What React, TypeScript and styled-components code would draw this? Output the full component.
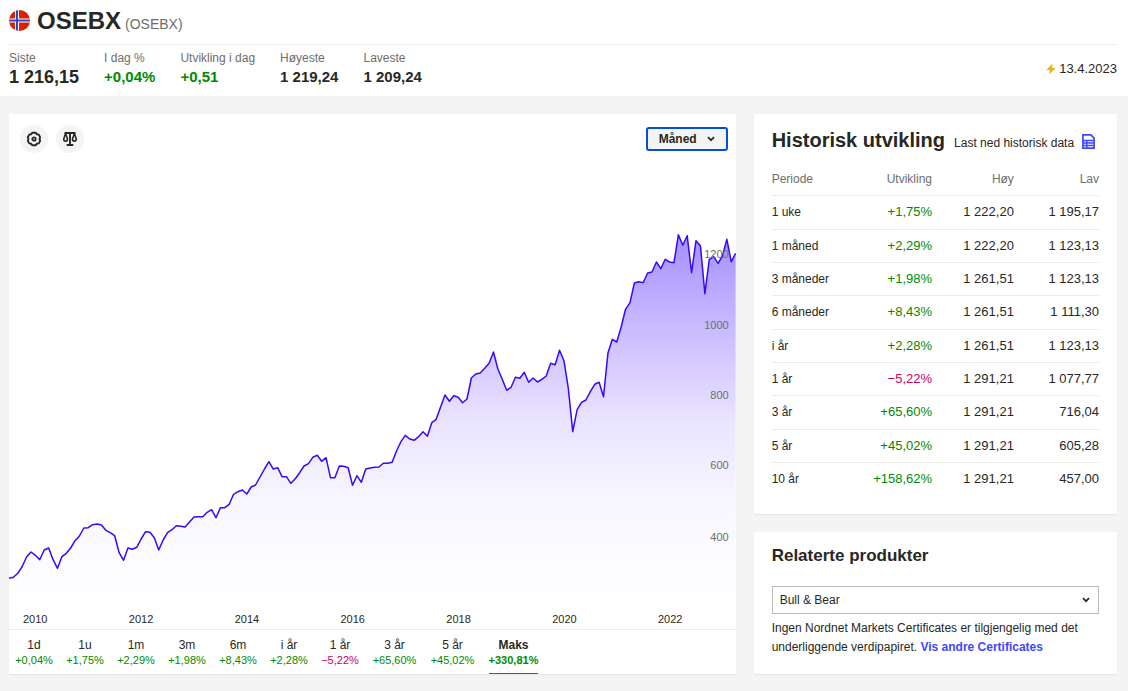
import React from "react";
import styled, { createGlobalStyle } from "styled-components";

const GlobalStyle = createGlobalStyle`
  *, *::before, *::after { box-sizing: border-box; }
  body {
    margin: 0;
    background: #f4f4f4;
    color: #282823;
    font-family: "Liberation Sans", Arial, sans-serif;
    font-size: 12px;
    line-height: 20px;
  }
  button, select { font: inherit; color: inherit; }
  h1, h2, p, dl, dd { margin: 0; }
`;

const green = "#008a00";
const red = "#cc0058";
const blue = "#4048ff";

const Header = styled.header`
  background: #fff;
  height: 96px;
  padding: 0 11px 0 9px;
`;
const TitleBar = styled.div`
  display: flex;
  align-items: center;
  height: 45px;
  padding-bottom: 4px;
  border-bottom: 1px solid #ebebe8;
`;
const Title = styled.h1`
  margin-left: 7px;
  padding-top: 2px;
  font-size: 24px;
  line-height: 30px;
  font-weight: 700;
`;
const Ticker = styled.span`
  margin-left: 4px;
  padding-top: 8px;
  font-size: 14px;
  color: #6e6e69;
`;
const StatsBar = styled.div`
  display: flex;
  align-items: center;
  justify-content: space-between;
  padding-top: 3px;
`;
const Stats = styled.dl`
  display: flex;
  gap: 25px;
`;
const StatLabel = styled.dt`
  line-height: 20px;
  color: #6e6e69;
`;
const StatValue = styled.dd<{ $large?: boolean; $up?: boolean }>`
  font-size: ${(p) => (p.$large ? 18 : 15)}px;
  line-height: 18px;
  font-weight: 700;
  color: ${(p) => (p.$up ? green : "inherit")};
`;
const Updated = styled.time`
  display: flex;
  align-items: center;
  gap: 3px;
  padding-top: 4px;
  font-size: 13px;
`;

const Main = styled.main`
  display: grid;
  grid-template-columns: 2fr 1fr;
  gap: 18px;
  padding: 18px 11px 18px 9px;
`;
const Card = styled.section`
  background: #fff;
  box-shadow: 0 1px 1px rgba(0, 0, 0, 0.05);
`;
const ChartCard = styled(Card)`
  display: flex;
  flex-direction: column;
  min-width: 0;
`;
const Toolbar = styled.div`
  display: flex;
  align-items: center;
  gap: 8px;
  padding: 11px 8px 0 11px;
`;
const RoundButton = styled.button`
  display: grid;
  place-items: center;
  width: 28px;
  height: 28px;
  padding: 0;
  border: 0;
  border-radius: 50%;
  background: #f4f4f4;
`;
const SelectWrap = styled.div<{ $compact?: boolean }>`
  display: grid;
  align-items: center;
  margin-left: ${(p) => (p.$compact ? "auto" : 0)};
  > * { grid-area: 1 / 1; }
  > svg {
    justify-self: end;
    margin-right: ${(p) => (p.$compact ? 13 : 9)}px;
    pointer-events: none;
  }
`;
const ResolutionSelect = styled.select`
  appearance: none;
  width: 82px;
  height: 24px;
  padding: 0 11px;
  border: 2px solid #0050dc;
  border-radius: 3px;
  background: #f4f4f4;
  font-weight: 700;
`;
const ProductSelect = styled.select`
  appearance: none;
  width: 100%;
  height: 28px;
  padding: 0 7px;
  border: 1px solid #bcbcb6;
  border-radius: 0;
  background: #fff;
`;

const Plot = styled.div`
  position: relative;
  height: 450px;
  > svg { display: block; width: 100%; height: 100%; }
`;
const YLabel = styled.span`
  position: absolute;
  right: 7px;
  font-size: 11px;
  line-height: 16px;
  color: #6e6e69;
  transform: translateY(-50%);
`;
const XAxis = styled.div`
  display: flex;
  height: 27px;
  padding: 7px 0 0 14px;
  border-bottom: 1px solid #ebebe8;
  font-size: 11px;
  line-height: 18px;
`;
const XLabel = styled.span`flex: 0 0 14.85%;`;
const Periods = styled.div`
  display: flex;
  gap: 15px;
  height: 44px;
  padding: 6px 7px 0;
`;
const PeriodButton = styled.button<{ $width: number; $active?: boolean }>`
  display: flex;
  flex-direction: column;
  align-items: center;
  width: ${(p) => p.$width}px;
  padding: 0;
  border: 0;
  border-bottom: 1px solid ${(p) => (p.$active ? blue : "transparent")};
  background: none;
  white-space: nowrap;
  line-height: 18px;
  font-weight: ${(p) => (p.$active ? 700 : 400)};
`;
const PeriodChange = styled.span<{ $down?: boolean }>`
  font-size: 11px;
  line-height: 12px;
  color: ${(p) => (p.$down ? red : green)};
`;

const Side = styled.div`
  display: flex;
  flex-direction: column;
  gap: 18px;
  min-width: 0;
`;
const HistoryCard = styled(Card)`
  padding: 12px 18px 19px;
`;
const CardHead = styled.div`
  display: flex;
  align-items: baseline;
  gap: 9px;
`;
const CardTitle = styled.h2<{ $small?: boolean }>`
  font-size: ${(p) => (p.$small ? 17 : 20)}px;
  line-height: 28px;
  font-weight: 700;
  white-space: nowrap;
`;
const Download = styled.a`
  display: flex;
  align-items: center;
  gap: 8px;
  color: inherit;
  text-decoration: none;
  white-space: nowrap;
  > svg { margin-bottom: 3px; }
`;
const Table = styled.table`
  width: 100%;
  margin-top: 9px;
  border-collapse: collapse;
  table-layout: fixed;
`;
const HeadCell = styled.th<{ $width: number }>`
  width: ${(p) => p.$width}%;
  height: 32px;
  padding: 0;
  border-bottom: 1px solid #ebebe8;
  font-weight: 400;
  text-align: right;
  color: #6e6e69;
  &:first-child { text-align: left; }
`;
const Row = styled.tr`
  height: 33px;
  border-bottom: 1px solid #ebebe8;
  &:nth-child(3n + 1) { height: 34px; }
  &:last-child { border-bottom: 0; }
`;
const RowHead = styled.th`
  padding: 0;
  font-weight: 400;
  text-align: left;
`;
const Cell = styled.td<{ $color?: string }>`
  padding: 0;
  font-size: 13px;
  text-align: right;
  color: ${(p) => p.$color ?? "inherit"};
`;
const RelatedCard = styled(Card)`
  flex: 1;
  padding: 10px 18px 16px;
`;
const RelatedBody = styled.div`
  margin-top: 16px;
`;
const Note = styled.p`
  margin-top: 5px;
  line-height: 19px;
`;
const NoteLink = styled.a`
  color: ${blue};
  font-weight: 700;
  text-decoration: none;
`;

const Flag = () => (
  <svg width="21" height="21" viewBox="0 0 21 21" aria-hidden="true">
    <clipPath id="disc"><circle cx="10.5" cy="10.5" r="10.5" /></clipPath>
    <g clipPath="url(#disc)">
      <rect width="21" height="21" fill="#dc2000" />
      <path d="M8 0v21M0 10.500h21" stroke="#fff" strokeWidth="4" />
      <path d="M8 0v21M0 10.500h21" stroke="#2c46c8" strokeWidth="2" />
    </g>
  </svg>
);
const Bolt = () => (
  <svg width="10" height="12" viewBox="0 0 10 12" aria-hidden="true">
    <path d="M6.600 0.500 0.300 7h3.400L3.200 11.500 9.700 5H6z" fill="#e3b51e" />
  </svg>
);
const Gear = () => (
  <svg width="16" height="16" viewBox="0 0 16 16" fill="none" stroke="#282823" aria-hidden="true">
    <path d="M6.200 1.700h3.600l1 1.500 2 .4 1.300 2.600L13.600 8l.5 1.800-1.300 2.600-2 .4-1 1.500H6.200l-1-1.500-2-.4-1.300-2.600L2.400 8l-.5-1.800 1.300-2.600 2-.4z" strokeWidth="1.900" strokeLinejoin="round" />
    <circle cx="8" cy="8" r="1.700" strokeWidth="1.800" />
  </svg>
);
const Scales = () => (
  <svg width="16" height="16" viewBox="0 0 16 16" fill="none" stroke="#282823" aria-hidden="true">
    <path d="M2.500 2h11M8 2v12M4.700 14h6.600" strokeWidth="1.900" />
    <path d="M3.600 2.500 1.700 8c0 1.400.8 2.100 1.900 2.100s1.900-.7 1.900-2.100zM12.400 2.500 10.500 8c0 1.400.8 2.100 1.900 2.100s1.900-.7 1.900-2.100z" strokeWidth="1.600" strokeLinejoin="round" />
  </svg>
);
const Chevron = () => (
  <svg width="8" height="6" viewBox="0 0 8 6" fill="none" aria-hidden="true">
    <path d="M1 1.200 4 4.200 7 1.200" stroke="#282823" strokeWidth="1.700" />
  </svg>
);
const Sheet = () => (
  <svg width="13" height="15" viewBox="0 0 13 15" fill="none" stroke={blue} strokeWidth="1.700" aria-hidden="true">
    <path d="M.9.900h8l3.200 3.200v10H.9z" />
    <path d="M1 6.500h11M1 9h11M1 11.500h11M4.800 6.500v7.500" strokeWidth="1.400" />
  </svg>
);

/* Monthly closes, as distances from the top of the plot area. */
const closes = [
  425.3, 424.3, 420.3, 413.5, 404, 399, 402.3, 406.7, 397, 395, 406.7, 415.3, 403.7, 400.3, 395, 387.7, 383, 375,
  374.7, 371.7, 371, 372, 377.3, 379.7, 382.7, 399.7, 407.3, 395, 396.3, 394.3, 386, 378.7, 379.3, 384.7, 397, 387,
  379.7, 376.7, 372.7, 373.3, 374, 369, 364, 363.7, 363.7, 359.3, 356.7, 364.7, 354.7, 354.7, 351.3, 341.3, 338.7,
  337, 341, 334, 332, 324, 316, 308.7, 316, 314.7, 323.7, 323.7, 330.3, 325.7, 319.7, 313, 310.7, 304.3, 302.3,
  308.3, 304.7, 324.7, 324.7, 313, 313.3, 314.7, 332.3, 322.7, 329.3, 316, 315, 314.3, 314, 310.3, 310.3, 309.3,
  298, 288.7, 282.3, 286, 287.3, 283.7, 278.7, 283.3, 269.7, 266.3, 254, 242, 248.3, 242.7, 244.3, 249.7, 246, 225,
  221, 220, 215.3, 210.3, 199, 216, 226.3, 237.3, 234.3, 224.3, 225.3, 219.3, 229.3, 225, 229, 226.3, 223, 210.3,
  211.7, 197.3, 207.7, 235.3, 278.7, 256.7, 249.3, 247, 238.7, 231.3, 229.3, 243.7, 200.3, 186.3, 189, 174.3, 156.3,
  149.7, 130, 128.7, 129.7, 120, 119, 109, 115.7, 106.3, 109, 109.7, 81.7, 92.3, 82.7, 119.7, 87.7, 93, 140.7,
  106.7, 103.7, 110.3, 103, 86.3, 108.7, 100.3,
];
const step = 727 / (closes.length - 1);
const line = closes.map((y, i) => `${(i * step).toFixed(1)},${y}`).join(" ");

const yTicks = [
  { value: 1200, top: 101 },
  { value: 1000, top: 172 },
  { value: 800, top: 242 },
  { value: 600, top: 312 },
  { value: 400, top: 384 },
];
const years = [2010, 2012, 2014, 2016, 2018, 2020, 2022];

const stats = [
  { label: "Siste", value: "1 216,15", large: true },
  { label: "I dag %", value: "+0,04%", up: true },
  { label: "Utvikling i dag", value: "+0,51", up: true },
  { label: "Høyeste", value: "1 219,24" },
  { label: "Laveste", value: "1 209,24" },
];
const periods = [
  { label: "1d", change: "+0,04%", width: 36 },
  { label: "1u", change: "+1,75%", width: 36 },
  { label: "1m", change: "+2,29%", width: 36 },
  { label: "3m", change: "+1,98%", width: 36 },
  { label: "6m", change: "+8,43%", width: 36 },
  { label: "i år", change: "+2,28%", width: 36 },
  { label: "1 år", change: "−5,22%", width: 36 },
  { label: "3 år", change: "+65,60%", width: 43 },
  { label: "5 år", change: "+45,02%", width: 43 },
  { label: "Maks", change: "+330,81%", width: 49 },
];
const history = [
  ["1 uke", "+1,75%", "1 222,20", "1 195,17"],
  ["1 måned", "+2,29%", "1 222,20", "1 123,13"],
  ["3 måneder", "+1,98%", "1 261,51", "1 123,13"],
  ["6 måneder", "+8,43%", "1 261,51", "1 111,30"],
  ["i år", "+2,28%", "1 261,51", "1 123,13"],
  ["1 år", "−5,22%", "1 291,21", "1 077,77"],
  ["3 år", "+65,60%", "1 291,21", "716,04"],
  ["5 år", "+45,02%", "1 291,21", "605,28"],
  ["10 år", "+158,62%", "1 291,21", "457,00"],
];

export default function App() {
  return (
    <>
      <GlobalStyle />
      <Header>
        <TitleBar>
          <Flag />
          <Title>OSEBX</Title>
          <Ticker>(OSEBX)</Ticker>
        </TitleBar>
        <StatsBar>
          <Stats>
            {stats.map((s) => (
              <div key={s.label}>
                <StatLabel>{s.label}</StatLabel>
                <StatValue $large={s.large} $up={s.up}>{s.value}</StatValue>
              </div>
            ))}
          </Stats>
          <Updated dateTime="2023-04-13"><Bolt />13.4.2023</Updated>
        </StatsBar>
      </Header>
      <Main>
        <ChartCard>
          <Toolbar>
            <RoundButton type="button" aria-label="Innstillinger"><Gear /></RoundButton>
            <RoundButton type="button" aria-label="Sammenlign"><Scales /></RoundButton>
            <SelectWrap $compact>
              <ResolutionSelect aria-label="Oppløsning"><option>Måned</option></ResolutionSelect>
              <Chevron />
            </SelectWrap>
          </Toolbar>
          <Plot>
            <svg viewBox="0 0 727 450" preserveAspectRatio="none" role="img" aria-label="Kursutvikling">
              <linearGradient id="fade" gradientUnits="userSpaceOnUse" x1="0" y1="82" x2="0" y2="450">
                <stop offset="0" stopColor="#a590ff" />
                <stop offset="0.3" stopColor="#cfc3ff" />
                <stop offset="0.5" stopColor="#e9e3ff" />
                <stop offset="0.72" stopColor="#f8f6ff" />
                <stop offset="1" stopColor="#ffffff" />
              </linearGradient>
              <polygon points={`0,450 ${line} 727,450`} fill="url(#fade)" />
              <polyline points={line} fill="none" stroke="#3808f8" strokeWidth="1.500" strokeLinejoin="round" vectorEffect="non-scaling-stroke" />
            </svg>
            {yTicks.map((t) => (
              <YLabel key={t.value} style={{ top: t.top }}>{t.value}</YLabel>
            ))}
          </Plot>
          <XAxis>{years.map((y) => <XLabel key={y}>{y}</XLabel>)}</XAxis>
          <Periods>
            {periods.map((p) => (
              <PeriodButton key={p.label} type="button" $width={p.width} $active={p.label === "Maks"}>
                {p.label}
                <PeriodChange $down={p.change.startsWith("−")}>{p.change}</PeriodChange>
              </PeriodButton>
            ))}
          </Periods>
        </ChartCard>
        <Side>
          <HistoryCard>
            <CardHead>
              <CardTitle>Historisk utvikling</CardTitle>
              <Download href="#">Last ned historisk data<Sheet /></Download>
            </CardHead>
            <Table>
              <thead>
                <tr>
                  <HeadCell scope="col" $width={24}>Periode</HeadCell>
                  <HeadCell scope="col" $width={25}>Utvikling</HeadCell>
                  <HeadCell scope="col" $width={25}>Høy</HeadCell>
                  <HeadCell scope="col" $width={26}>Lav</HeadCell>
                </tr>
              </thead>
              <tbody>
                {history.map(([period, change, high, low]) => (
                  <Row key={period}>
                    <RowHead scope="row">{period}</RowHead>
                    <Cell $color={change.startsWith("−") ? red : green}>{change}</Cell>
                    <Cell>{high}</Cell>
                    <Cell>{low}</Cell>
                  </Row>
                ))}
              </tbody>
            </Table>
          </HistoryCard>
          <RelatedCard>
            <CardTitle $small>Relaterte produkter</CardTitle>
            <RelatedBody>
              <SelectWrap>
                <ProductSelect aria-label="Produkttype"><option>Bull &amp; Bear</option></ProductSelect>
                <Chevron />
              </SelectWrap>
              <Note>
                Ingen Nordnet Markets Certificates er tilgjengelig med det underliggende verdipapiret.{" "}
                <NoteLink href="#">Vis andre Certificates</NoteLink>
              </Note>
            </RelatedBody>
          </RelatedCard>
        </Side>
      </Main>
    </>
  );
}
